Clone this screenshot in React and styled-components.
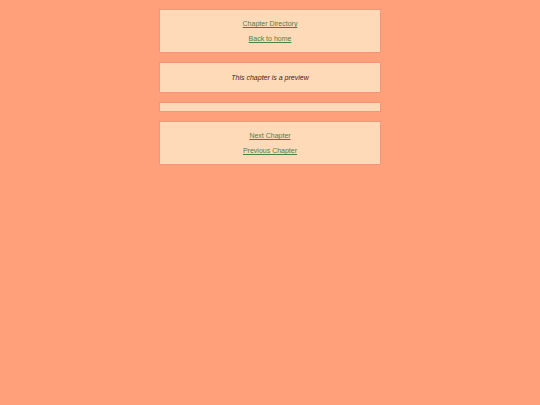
import React from "react";
import styled, { createGlobalStyle } from "styled-components";

const Global = createGlobalStyle`
  html, body {
    margin: 0;
    padding: 0;
    background: #ffa07a;
    min-height: 100%;
  }
  body {
    font-family: "Liberation Sans", Arial, sans-serif;
    font-size: 7px;
  }
`;

const Page = styled.div`
  display: flex;
  flex-direction: column;
  align-items: center;
  gap: 9px;
  padding-top: 9px;
`;

const Panel = styled.div`
  box-sizing: border-box;
  width: 222px;
  min-height: ${(p) => p.$minHeight || 0}px;
  background: #ffdab9;
  border: 1px solid #f3957a;
  display: flex;
  flex-direction: column;
  align-items: center;
  gap: 6px;
  padding: ${(p) => p.$pad || "9px 0"};
`;

const NavLink = styled.a`
  display: block;
  line-height: 9px;
  color: #4c7f45;
  text-decoration: underline;
  cursor: pointer;
`;

const Note = styled.p`
  margin: 0;
  line-height: 9px;
  font-style: italic;
  color: #3a1d10;
`;

export default function App() {
  return (
    <>
      <Global />
      <Page>
        <Panel>
          <NavLink href="#">Chapter Directory</NavLink>
          <NavLink href="#">Back to home</NavLink>
        </Panel>
        <Panel $pad="10px 0">
          <Note>This chapter is a preview</Note>
        </Panel>
        <Panel $pad="0" $minHeight={10} />
        <Panel>
          <NavLink href="#">Next Chapter</NavLink>
          <NavLink href="#">Previous Chapter</NavLink>
        </Panel>
      </Page>
    </>
  );
}
